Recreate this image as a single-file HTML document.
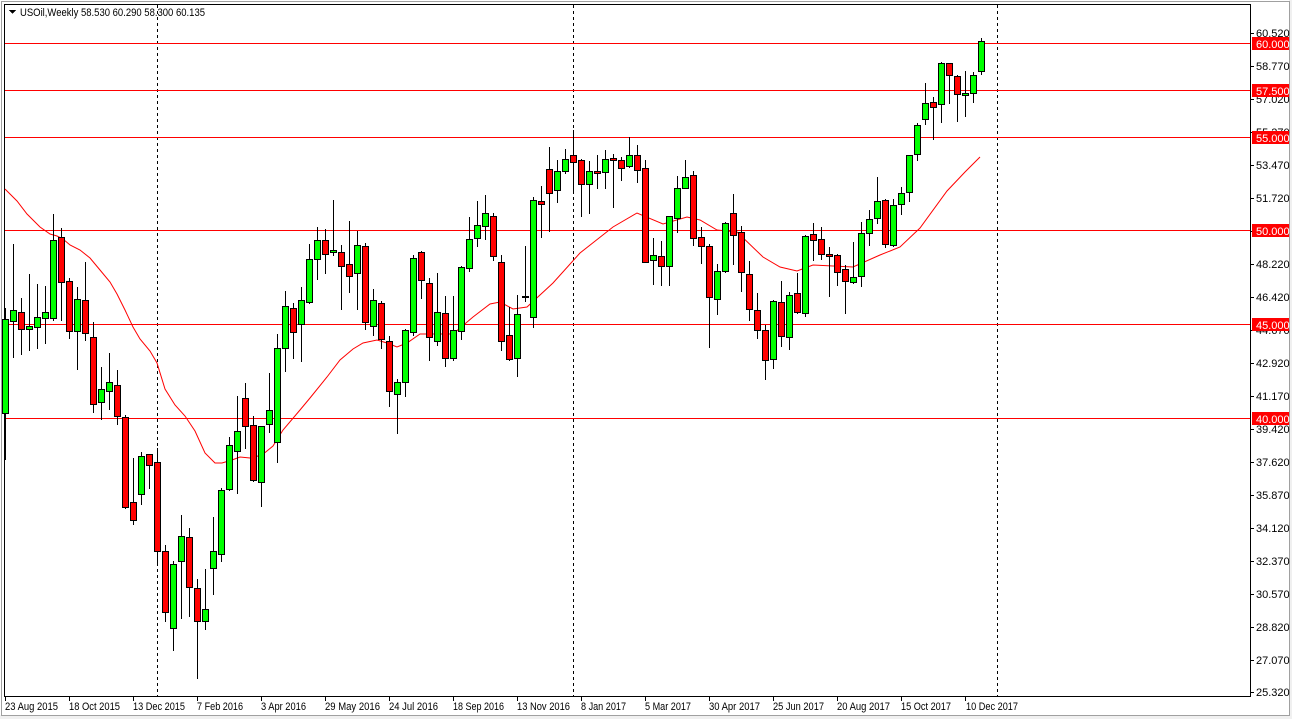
<!DOCTYPE html>
<html><head><meta charset="utf-8"><style>
html,body{margin:0;padding:0;background:#fff;width:1292px;height:719px;overflow:hidden}
svg{display:block}
text{font-family:"Liberation Sans",sans-serif;font-size:11px;fill:#000}
.d text{font-size:11px}
</style></head><body>
<svg width="1292" height="719" viewBox="0 0 1292 719" shape-rendering="crispEdges">
<rect x="0" y="0" width="1292" height="719" fill="#fff"/>
<rect x="0" y="715" width="1292" height="4" fill="#f0f0f0"/>
<rect x="1289" y="0" width="3" height="719" fill="#f0f0f0"/>
<rect x="1.5" y="1.5" width="1288" height="714" fill="none" stroke="#a0a0a0"/>
<line x1="4.5" y1="4" x2="4.5" y2="697" stroke="#000"/>
<line x1="4" y1="696.5" x2="1251" y2="696.5" stroke="#000"/>
<line x1="1250.5" y1="4" x2="1250.5" y2="697" stroke="#000"/>
<line x1="4" y1="4.5" x2="1251" y2="4.5" stroke="#000"/>
<g stroke="#000" stroke-dasharray="3,3">
<line x1="157.5" y1="5" x2="157.5" y2="696"/>
<line x1="573.5" y1="5" x2="573.5" y2="696"/>
<line x1="997.5" y1="5" x2="997.5" y2="696"/>
</g>
<g stroke="#ff0000">
<line x1="5" y1="43.5" x2="1250" y2="43.5"/>
<line x1="5" y1="90.5" x2="1250" y2="90.5"/>
<line x1="5" y1="137.5" x2="1250" y2="137.5"/>
<line x1="5" y1="230.5" x2="1250" y2="230.5"/>
<line x1="5" y1="324.5" x2="1250" y2="324.5"/>
<line x1="5" y1="418.5" x2="1250" y2="418.5"/>
</g>
<polyline shape-rendering="auto" fill="none" stroke="#ff0000" stroke-width="1" points="5,189 17,201 27,214 40,227 50,234 57,236 63,239 70,245 80,250 90,258 100,270 110,282 117,294 125,310 133,327 140,339 150,351 157,363 165,389 175,405 185,416 195,431 205,453 215,463 222,463 232,460 240,457 250,458 262,455 273,446 283,430 300,410 310,398 327,377 340,360 353,349 363,343 377,340 387,343 397,347 407,343 420,334 435,334 453,334 473,317 490,304 500,302 513,309 527,307 553,283 580,253 613,227 637,213 663,224 687,217 700,220 717,230 737,232 763,257 780,267 797,271 813,265 853,267 880,255 900,247 920,228 947,191 965,172 980,157"/>
<g id="c" stroke="#000" stroke-width="1"></g>
<polygon points="9,10 16,10 12.5,14" fill="#000"/>
<text x="20" y="16" textLength="185" lengthAdjust="spacingAndGlyphs">USOil,Weekly  58.530 60.290 58.300 60.135</text>
<g stroke="#000">
<line x1="1251" y1="33.5" x2="1254" y2="33.5"/><line x1="1251" y1="66.5" x2="1254" y2="66.5"/><line x1="1251" y1="99.5" x2="1254" y2="99.5"/><line x1="1251" y1="132.5" x2="1254" y2="132.5"/><line x1="1251" y1="165.5" x2="1254" y2="165.5"/><line x1="1251" y1="198.5" x2="1254" y2="198.5"/><line x1="1251" y1="231.5" x2="1254" y2="231.5"/><line x1="1251" y1="264.5" x2="1254" y2="264.5"/><line x1="1251" y1="297.5" x2="1254" y2="297.5"/><line x1="1251" y1="330.5" x2="1254" y2="330.5"/><line x1="1251" y1="363.5" x2="1254" y2="363.5"/><line x1="1251" y1="396.5" x2="1254" y2="396.5"/><line x1="1251" y1="429.5" x2="1254" y2="429.5"/><line x1="1251" y1="462.5" x2="1254" y2="462.5"/><line x1="1251" y1="495.5" x2="1254" y2="495.5"/><line x1="1251" y1="528.5" x2="1254" y2="528.5"/><line x1="1251" y1="561.5" x2="1254" y2="561.5"/><line x1="1251" y1="594.5" x2="1254" y2="594.5"/><line x1="1251" y1="627.5" x2="1254" y2="627.5"/><line x1="1251" y1="660.5" x2="1254" y2="660.5"/><line x1="1251" y1="692.5" x2="1254" y2="692.5"/>
</g>
<g>
<text x="1256" y="37">60.520</text><text x="1256" y="70">58.770</text><text x="1256" y="103">57.020</text><text x="1256" y="136">55.270</text><text x="1256" y="169">53.470</text><text x="1256" y="202">51.720</text><text x="1256" y="268">48.220</text><text x="1256" y="301">46.420</text><text x="1256" y="334">44.670</text><text x="1256" y="367">42.920</text><text x="1256" y="400">41.170</text><text x="1256" y="433">39.420</text><text x="1256" y="466">37.620</text><text x="1256" y="499">35.870</text><text x="1256" y="532">34.120</text><text x="1256" y="565">32.370</text><text x="1256" y="598">30.570</text><text x="1256" y="631">28.820</text><text x="1256" y="664">27.070</text><text x="1256" y="696">25.320</text>
</g>
<g>
<rect x="1252" y="37" width="37" height="13" fill="#ff0000"/><text x="1256" y="48" style="fill:#fff">60.000</text>
<rect x="1252" y="84" width="37" height="13" fill="#ff0000"/><text x="1256" y="95" style="fill:#fff">57.500</text>
<rect x="1252" y="131" width="37" height="13" fill="#ff0000"/><text x="1256" y="142" style="fill:#fff">55.000</text>
<rect x="1252" y="224" width="37" height="13" fill="#ff0000"/><text x="1256" y="235" style="fill:#fff">50.000</text>
<rect x="1252" y="318" width="37" height="13" fill="#ff0000"/><text x="1256" y="329" style="fill:#fff">45.000</text>
<rect x="1252" y="412" width="37" height="13" fill="#ff0000"/><text x="1256" y="423" style="fill:#fff">40.000</text>
</g>
<g stroke="#000">
<line x1="5.5" y1="697" x2="5.5" y2="701"/><line x1="69.5" y1="697" x2="69.5" y2="701"/><line x1="133.5" y1="697" x2="133.5" y2="701"/><line x1="197.5" y1="697" x2="197.5" y2="701"/><line x1="261.5" y1="697" x2="261.5" y2="701"/><line x1="325.5" y1="697" x2="325.5" y2="701"/><line x1="389.5" y1="697" x2="389.5" y2="701"/><line x1="453.5" y1="697" x2="453.5" y2="701"/><line x1="517.5" y1="697" x2="517.5" y2="701"/><line x1="581.5" y1="697" x2="581.5" y2="701"/><line x1="645.5" y1="697" x2="645.5" y2="701"/><line x1="709.5" y1="697" x2="709.5" y2="701"/><line x1="773.5" y1="697" x2="773.5" y2="701"/><line x1="837.5" y1="697" x2="837.5" y2="701"/><line x1="901.5" y1="697" x2="901.5" y2="701"/><line x1="965.5" y1="697" x2="965.5" y2="701"/>
</g>
<g class="d">
<text x="5" y="710" textLength="53" lengthAdjust="spacingAndGlyphs">23 Aug 2015</text>
<text x="69" y="710" textLength="51" lengthAdjust="spacingAndGlyphs">18 Oct 2015</text>
<text x="133" y="710" textLength="52" lengthAdjust="spacingAndGlyphs">13 Dec 2015</text>
<text x="197" y="710" textLength="46" lengthAdjust="spacingAndGlyphs">7 Feb 2016</text>
<text x="261" y="710" textLength="45" lengthAdjust="spacingAndGlyphs">3 Apr 2016</text>
<text x="325" y="710" textLength="55" lengthAdjust="spacingAndGlyphs">29 May 2016</text>
<text x="389" y="710" textLength="49" lengthAdjust="spacingAndGlyphs">24 Jul 2016</text>
<text x="453" y="710" textLength="51" lengthAdjust="spacingAndGlyphs">18 Sep 2016</text>
<text x="517" y="710" textLength="53" lengthAdjust="spacingAndGlyphs">13 Nov 2016</text>
<text x="581" y="710" textLength="45" lengthAdjust="spacingAndGlyphs">8 Jan 2017</text>
<text x="645" y="710" textLength="46" lengthAdjust="spacingAndGlyphs">5 Mar 2017</text>
<text x="709" y="710" textLength="51" lengthAdjust="spacingAndGlyphs">30 Apr 2017</text>
<text x="773" y="710" textLength="51" lengthAdjust="spacingAndGlyphs">25 Jun 2017</text>
<text x="837" y="710" textLength="53" lengthAdjust="spacingAndGlyphs">20 Aug 2017</text>
<text x="901" y="710" textLength="50" lengthAdjust="spacingAndGlyphs">15 Oct 2017</text>
<text x="966" y="710" textLength="52" lengthAdjust="spacingAndGlyphs">10 Dec 2017</text>
</g>
</svg>
<script>
var d=`5 G 319 413 308 460
13 G 310 321 244 358
21 R 312 329 298 355
29 G 326 329 274 351
37 G 317 327 284 349
45 G 312 318 286 344
53 G 240 318 214 321
61 R 237 282 228 321
69 R 281 331 278 339
77 G 299 331 287 370
85 R 300 333 262 341
93 R 337 404 322 413
101 G 389 402 367 420
109 G 382 391 353 410
117 R 385 416 370 425
125 R 417 507 415 509
133 R 502 520 458 525
141 G 456 494 452 505
149 R 454 465 454 489
157 R 462 551 448 566
165 R 551 612 545 622
173 G 564 628 561 651
181 G 536 561 515 619
189 R 537 587 528 617
197 R 588 621 579 679
205 G 609 621 569 630
213 G 551 568 517 595
221 G 490 554 488 562
229 G 445 489 437 491
237 G 431 451 396 494
245 R 398 426 383 449
253 R 425 480 416 482
261 G 426 482 426 507
269 G 410 424 373 433
277 G 348 442 334 463
285 G 306 348 291 372
293 R 308 332 303 359
301 G 300 324 287 362
309 G 259 302 244 304
317 G 240 259 227 280
325 R 240 254 229 274
333 G 250 252 200 256
341 R 252 266 245 310
349 R 264 276 221 293
357 G 245 273 231 310
365 R 246 322 243 330
373 G 300 326 289 336
381 R 303 339 301 349
389 R 341 391 336 407
397 G 382 394 379 434
405 G 330 382 329 397
413 G 258 332 255 336
421 R 252 280 251 299
429 R 283 337 278 361
437 G 312 341 273 346
445 R 313 358 296 367
453 G 330 358 296 361
461 G 267 331 266 340
469 G 239 268 217 272
477 G 225 238 201 247
485 G 213 226 195 240
493 R 216 256 213 261
501 R 262 341 255 351
509 R 335 359 307 361
517 G 314 358 295 377
525 G 296 297 246 302
533 G 200 317 197 328
541 R 201 204 186 238
549 R 169 193 147 232
557 G 171 190 160 203
565 G 159 171 149 174
573 R 155 162 130 192
581 R 160 184 159 217
589 G 171 184 161 214
597 R 171 173 155 189
605 G 159 172 150 189
613 R 158 160 154 208
621 R 160 168 157 181
629 G 155 166 137 168
637 R 155 170 145 183
645 R 168 262 160 262
653 G 255 260 238 285
661 R 256 266 241 286
669 G 216 266 216 286
677 G 188 218 176 233
685 G 177 188 160 188
693 R 175 238 171 246
701 R 237 246 227 264
709 R 246 297 244 348
717 G 271 299 264 315
725 G 223 271 222 273
733 R 213 235 194 265
741 R 232 272 226 292
749 R 274 309 261 321
757 R 310 330 293 339
765 R 330 360 325 380
773 G 301 359 300 369
781 R 302 336 281 347
789 G 295 337 292 350
797 R 293 312 273 314
805 G 236 313 235 317
813 R 234 240 223 261
821 R 239 254 227 260
829 R 254 256 247 297
837 R 255 272 254 286
845 R 269 281 265 314
853 G 277 282 242 284
861 G 233 276 222 287
869 G 219 233 210 246
877 G 201 218 177 224
885 R 200 244 199 248
893 G 205 245 199 247
901 G 193 204 187 215
909 G 155 192 155 202
917 G 125 154 123 161
925 G 103 119 83 125
933 R 102 107 97 140
941 G 63 104 62 123
949 R 63 75 63 104
957 R 76 94 75 122
965 G 93 95 71 117
973 G 75 93 72 103
981 G 41 71 38 75`;
var g=document.getElementById('c'),s='';
d.split('\n').forEach(function(l){var p=l.trim().split(/\s+/),x=+p[0],c=p[1]=='G'?'#00ff00':'#ff0000',t=+p[2],b=+p[3],h=+p[4],w=+p[5];
s+='<line x1="'+(x+.5)+'" y1="'+h+'" x2="'+(x+.5)+'" y2="'+w+'"/>';
s+='<rect x="'+(x-2.5)+'" y="'+(t+.5)+'" width="6" height="'+Math.max(1,b-t)+'" fill="'+c+'"/>';});
g.innerHTML=s;
</script>
</body></html>
